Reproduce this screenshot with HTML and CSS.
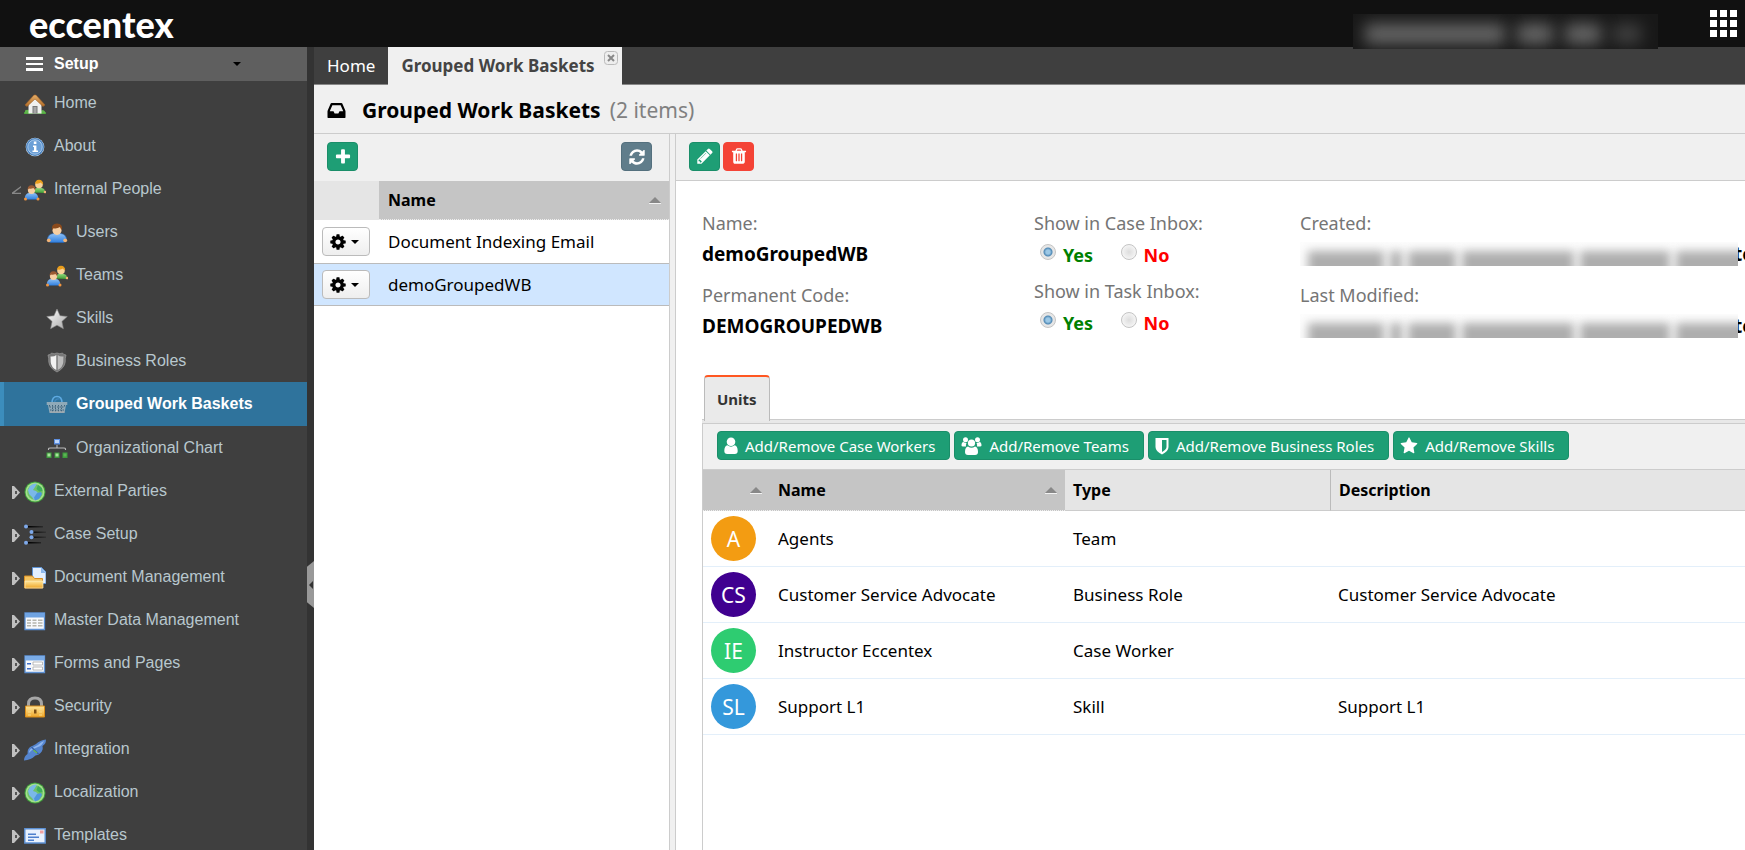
FILE: index.html
```html
<!DOCTYPE html>
<html lang="en">
<head>
<meta charset="utf-8">
<title>Grouped Work Baskets</title>
<link rel="stylesheet" href="styles.css">
</head>
<body>
<svg class="sprite" aria-hidden="true">
  <defs>
    <linearGradient id="g-blue" x1="0" y1="0" x2="0" y2="1"><stop offset="0" stop-color="#8fc1f5"/><stop offset="1" stop-color="#2f7fe0"/></linearGradient>
    <linearGradient id="g-green" x1="0" y1="0" x2="0" y2="1"><stop offset="0" stop-color="#8ed67a"/><stop offset="1" stop-color="#3f9c35"/></linearGradient>
    <linearGradient id="g-gold" x1="0" y1="0" x2="0" y2="1"><stop offset="0" stop-color="#ffe69a"/><stop offset="1" stop-color="#eea62a"/></linearGradient>
    <linearGradient id="g-silver" x1="0" y1="0" x2="1" y2="1"><stop offset="0" stop-color="#ffffff"/><stop offset="1" stop-color="#a8a8a8"/></linearGradient>
    <linearGradient id="g-roof" x1="0" y1="0" x2="0" y2="1"><stop offset="0" stop-color="#e5ad68"/><stop offset="1" stop-color="#b06b25"/></linearGradient>
    <linearGradient id="g-fade" x1="0" y1="0" x2="1" y2="0"><stop offset="0" stop-color="#000"/><stop offset="1" stop-color="#000" stop-opacity=".2"/></linearGradient>
    <symbol id="i-house" viewBox="0 0 22 22">
      <path d="M0 19h22v2H0z" fill="#4c9a3c"/><path d="M1 17.500q3-2 5 1v2H1zM16 18.500q3-3 5 0v2h-5z" fill="#5fb54b"/>
      <path d="M4.500 11 11 5l6.500 6v9.500h-13z" fill="#f0f0ee"/><path d="M8.500 13h5v7.500h-5z" fill="#777"/><path d="M9.500 14h3v6.500h-3z" fill="#a5a5a5"/>
      <path d="M1 12 10 2h2l9 10-2 1.500-8-7.500-8 7.500z" fill="url(#g-roof)" stroke="#a2632a" stroke-width=".6"/>
    </symbol>
    <symbol id="i-info" viewBox="0 0 22 22">
      <circle cx="11" cy="11" r="9.300" fill="#dbe8f6"/><circle cx="11" cy="11" r="9" fill="#4c84c0"/><circle cx="11" cy="11" r="7.200" fill="#6b9fd6" stroke="#a9c9eb"/>
      <path d="M9.800 5.500h2.600v2.400H9.800zM9 9.500h3.400v5H14V16H8.500v-1.500H10V11H9z" fill="#fff"/>
    </symbol>
    <symbol id="i-person" viewBox="0 0 22 22">
      <path d="M1.500 19q-.5-7 6-7.500h7q6.500.5 6 7.500l-3 1.500h-13z" fill="url(#g-blue)" stroke="#2968b8" stroke-width=".6"/>
      <circle cx="2.800" cy="18.300" r="1.900" fill="#f2b375"/><circle cx="19.200" cy="18.300" r="1.900" fill="#f2b375"/>
      <ellipse cx="11" cy="8" rx="4.600" ry="5" fill="#f7cfa2"/><path d="M6 8Q5 1.500 11 1.500T16 8Q14.500 7 14 5q-3 2-6.500 1.200Q7 7.500 6 8z" fill="#8a4a1c"/>
    </symbol>
    <symbol id="i-people" viewBox="0 0 22 22">
      <path d="M9 13.500q.5-4 4-4.500h4.500q4 .5 3.500 5z" fill="url(#g-green)"/><circle cx="15" cy="5.500" r="3.800" fill="#f9d29a"/><path d="M11 5.500Q11 .8 15 .8t4.200 4.700Q17.500 5 17 3.500q-2.500 1.500-5 1z" fill="#e99d1b"/><circle cx="21" cy="13" r="1.300" fill="#f2b375"/>
      <path d="M.8 20.500Q.5 14.500 5 14h5q4.500.5 4.200 6.500z" fill="url(#g-blue)"/><circle cx="1.500" cy="20" r="1.500" fill="#f2953f"/><circle cx="14" cy="20" r="1.500" fill="#f2953f"/>
      <ellipse cx="7.500" cy="11" rx="3.600" ry="4" fill="#f7cfa2"/><path d="M3.600 11Q3.500 6.200 7.500 6.200t3.900 4.800q-1.400-.5-1.900-2-2.500 1.200-4.500.5z" fill="#9a5a32"/>
    </symbol>
    <symbol id="i-star" viewBox="0 0 22 22"><path d="M11 1l3 6.700 7.300.8-5.400 4.900 1.500 7.300L11 17.200l-6.400 3.500 1.500-7.300L.7 8.500 8 7.700z" fill="url(#g-silver)" stroke="#888" stroke-width=".6"/></symbol>
    <symbol id="i-shield" viewBox="0 0 22 22"><path d="M2 4q2.500 0 3.500-2Q8 3.500 11 2q3 1.500 5.500 0 1 2 3.500 2-1 3-.8 7-.7 6-8.200 10Q3.500 17 2.800 11 3 7 2 4z" fill="#777" stroke="#999" stroke-width=".7"/><path d="M4.500 5.500Q8 6 10.300 4v15Q5 16 4.700 11q0-3-.2-5.500z" fill="#f2f2f2"/><path d="M11.700 4q2.300 2 5.800 1.500-.2 2.500-.2 5.500-.3 5-5.600 8z" fill="#bdbdbd"/></symbol>
    <symbol id="i-basket" viewBox="0 0 22 22">
      <path d="M6 9Q6 2.500 11 2.500T16 9" fill="none" stroke="#5eaae2" stroke-width="1.600"/><path d="M8.500 9Q9 4.500 13.500 5" fill="none" stroke="#3e86bd" stroke-width="1.200"/>
      <path d="M.7 8h20.600v3H20l-1.500 8h-15L2 11H.7z" fill="#8fa9b8"/><path d="M3.500 11v2M6.500 11v7M9.500 11v7M12.500 11v7M15.500 11v7M18.500 11v2M3.500 13h15M4 16h14" stroke="#40657c" stroke-width="1" stroke-dasharray="1.500 1"/><path d="M4 18h14.500" stroke="#aaa"/>
    </symbol>
    <symbol id="i-org" viewBox="0 0 22 22">
      <path d="M8 1h6v5.500H8z" fill="#5d8fe0"/><path d="M9 2h4v3H9z" fill="#bcd5fa"/><path d="M11 7v3M2.500 12v-1.200q0-.8 2-.8h13q2 0 2 .8V12" fill="none" stroke="#bbb" stroke-width="1.100"/>
      <path d="M.5 14.500h5V20h-5zM8.500 14.500h5V20h-5zM16.500 14.500h5V20h-5z" fill="#3c9b3c"/><path d="M1.500 15.500h3V18.500h-3zM9.500 15.500h3v3h-3z" fill="#a6e39a"/><path d="M17.500 15.500h3v3h-3z" fill="#5bb352"/>
    </symbol>
    <symbol id="i-globe" viewBox="0 0 22 22"><circle cx="11" cy="11" r="10.500" fill="#3e9d3b"/><circle cx="11" cy="11" r="9.500" fill="#a5e08c"/><circle cx="11" cy="11" r="7.800" fill="#6fc267"/><path d="M6 5q3-3 7-2.500L11 6 9 9l3 1 3 3-2 4-3 2-2-3-3-3-1-4z" fill="#7ab8e8"/><path d="M13 12l4-1 1 2-3 5-4 1.500-1-3z" fill="#4f96dd"/><path d="M14 4l4 3 .5 3-3 .5-3-2.500z" fill="#3fae5a"/></symbol>
    <symbol id="i-tree" viewBox="0 0 22 22"><path d="M4 2h15v1.500H4zM9 7.500h13V9H9zM9 12.500h13V14H9zM4 18h13v1.500H4z" fill="url(#g-fade)"/><circle cx="2" cy="2.500" r="2" fill="#7ea9ea"/><circle cx="7.500" cy="8" r="2" fill="#7ea9ea"/><circle cx="7.500" cy="13.300" r="2" fill="#7ea9ea"/><circle cx="2" cy="18.800" r="2" fill="#7ea9ea"/></symbol>
    <symbol id="i-folder" viewBox="0 0 22 22"><path d="M8.500.5h9L22 5v11.500H8.500z" fill="#e4f0ff" stroke="#5d92d4"/><path d="M17 .5V6h5z" fill="#8db8ec"/><path d="M.5 9h8l2 2.500h8V21H.5z" fill="#f5c460" stroke="#d98e22"/><path d="M1 14h18v7H1z" fill="url(#g-gold)" stroke="#f8ebbf" stroke-width=".7"/></symbol>
    <symbol id="i-grid" viewBox="0 0 22 22"><path d="M1 3h19.500v16.500H1z" fill="#f7f9fc" stroke="#5c90d3" stroke-width="1.300"/><path d="M1 3h19.500v4.500H1z" fill="#6fa3e2"/><path d="M3 9.500h4V11H3zM8.500 9.500h4V11h-4zM14 9.500h4.500V11H14zM3 12.200h4v1.500H3zM8.500 12.200h4v1.500h-4zM14 12.200h4.500v1.500H14zM3 15h4v1.500H3zM8.500 15h4v1.500h-4zM14 15h4.500v1.500H14z" fill="#b5b5ad"/></symbol>
    <symbol id="i-form" viewBox="0 0 22 22"><path d="M1 3h19.500v16.500H1z" fill="#f7f9fc" stroke="#5c90d3" stroke-width="1.300"/><path d="M1 3h19.500v4.500H1z" fill="#7aabe6"/><path d="M3 10h4v1.500H3zM3 15h4v1.500H3z" fill="#3f6fc9"/><path d="M9 9h9.500v3H9zM9 14h9.500v3H9z" fill="#fff" stroke="#aaa" stroke-width=".8"/></symbol>
    <symbol id="i-lock" viewBox="0 0 22 22"><path d="M4.500 11V8Q4.500 2 11 2t6.500 6v3" fill="none" stroke="#a6a6a6" stroke-width="3"/><path d="M1.500 10h19v11h-19z" fill="url(#g-gold)" stroke="#d98c1a"/><path d="M4 13h3M4 16h3M4 19h3M15 13h3M15 16h3M15 19h3" stroke="#f8dc8c"/><path d="M10 13.500h2.500v4H10z" fill="#7a4c12"/></symbol>
    <symbol id="i-plug" viewBox="0 0 22 22"><path d="M0 21.500Q0 17 3.500 15 3 9.500 7 7.500q2-1 5-2.500Q16 1 22 .5q0 4.500-3.500 6.500 1 4-2 7-2 2-5 2.500Q7 21 0 21.500z" fill="#5585cf"/><path d="M5 14q0-4 4-5.500L14 6q3-3 6-4-2 5-6 6Q8 10 5 14z" fill="#8db5ee"/><path d="M7.500 8l7 7" stroke="#3a62a8" stroke-width="1.500"/><path d="M9.500 11l3.500 3" stroke="#69b84e" stroke-width="1.500"/></symbol>
    <symbol id="i-card" viewBox="0 0 22 22"><path d="M.8 3.800h20.400V18H.8z" fill="#e8f1fd" stroke="#5c90d3" stroke-width="1.400"/><path d="M16 5.500h3.500v3H16z" fill="#f0a0a0"/><path d="M4 8.500h8V10H4zM4 11.500h11V13H4zM4 14.500h6V16H4z" fill="#4d80cd"/></symbol>
    <symbol id="i-plus" viewBox="0 0 1792 1792"><path d="M1600 736v192q0 40-28 68t-68 28h-416v416q0 40-28 68t-68 28h-192q-40 0-68-28t-28-68v-416h-416q-40 0-68-28t-28-68v-192q0-40 28-68t68-28h416v-416q0-40 28-68t68-28h192q40 0 68 28t28 68v416h416q40 0 68 28t28 68z"/></symbol>
    <symbol id="i-refresh" viewBox="0 0 1792 1792"><path d="M1639 1056q0 5-1 7-64 268-268 434.500t-478 166.500q-146 0-282.500-55t-243.500-157l-129 129q-19 19-45 19t-45-19-19-45v-448q0-26 19-45t45-19h448q26 0 45 19t19 45-19 45l-137 137q71 66 161 102t187 36q134 0 250-65t186-179q11-17 53-117 8-23 30-23h192q13 0 22.500 9.500t9.500 22.500zm25-800v448q0 26-19 45t-45 19h-448q-26 0-45-19t-19-45 19-45l138-138q-148-137-349-137-134 0-250 65t-186 179q-11 17-53 117-8 23-30 23h-199q-13 0-22.500-9.500t-9.500-22.500v-7q65-268 270-434.500t480-166.500q146 0 284 55.500t245 156.500l130-129q19-19 45-19t45 19 19 45z"/></symbol>
    <symbol id="i-cog" viewBox="0 0 1792 1792"><path d="M1152 896q0-106-75-181t-181-75-181 75-75 181 75 181 181 75 181-75 75-181zm512-109v222q0 12-8 23t-20 13l-185 28q-19 54-39 91 35 50 107 138 10 12 10 25t-9 23q-27 37-99 108t-94 71q-12 0-26-9l-138-108q-44 23-91 38-16 136-29 186-7 28-36 28h-222q-14 0-24.500-8.500t-11.500-21.500l-28-184q-49-16-90-37l-141 107q-10 9-25 9-14 0-25-11-126-114-165-168-7-10-7-23 0-12 8-23 15-21 51-66.500t54-70.500q-27-50-41-99l-183-27q-13-2-21-12.500t-8-23.500v-222q0-12 8-23t19-13l186-28q14-46 39-92-40-57-107-138-10-12-10-24 0-10 9-23 26-36 98.500-107.500t94.500-71.500q13 0 26 10l138 107q44-23 91-38 16-136 29-186 7-28 36-28h222q14 0 24.500 8.500t11.500 21.500l28 184q49 16 90 37l142-107q9-9 24-9 13 0 25 10 129 119 165 170 7 8 7 22 0 12-8 23-15 21-51 66.500t-54 70.500q26 50 41 98l183 28q13 2 21 12.500t8 23.500z"/></symbol>
    <symbol id="i-pencil" viewBox="0 0 1792 1792"><path d="M491 1536l91-91-235-235-91 91v107h128v128h107zm523-928q0-22-22-22-10 0-17 7l-542 542q-7 7-7 17 0 22 22 22 10 0 17-7l542-542q7-7 7-17zm-54-192l416 416-832 832h-416v-416zm683 96q0 53-37 90l-166 166-416-416 166-165q36-38 90-38 53 0 91 38l235 234q37 39 37 91z"/></symbol>
    <symbol id="i-trash" viewBox="0 0 1792 1792"><path d="M704 1376v-704q0-14-9-23t-23-9h-64q-14 0-23 9t-9 23v704q0 14 9 23t23 9h64q14 0 23-9t9-23zm256 0v-704q0-14-9-23t-23-9h-64q-14 0-23 9t-9 23v704q0 14 9 23t23 9h64q14 0 23-9t9-23zm256 0v-704q0-14-9-23t-23-9h-64q-14 0-23 9t-9 23v704q0 14 9 23t23 9h64q14 0 23-9t9-23zm-544-992h448l-48-117q-7-9-17-11h-317q-10 2-17 11zm928 32v64q0 14-9 23t-23 9h-96v948q0 83-47 143.500t-113 60.500h-832q-66 0-113-58.500t-47-141.500v-952h-96q-14 0-23-9t-9-23v-64q0-14 9-23t23-9h309l70-167q15-37 54-63t79-26h320q40 0 79 26t54 63l70 167h309q14 0 23 9t9 23z"/></symbol>
    <symbol id="i-fstar" viewBox="0 0 1792 1792"><path d="M1728 647q0 22-26 48l-363 354 86 500q1 7 1 20 0 21-10.500 35.500t-30.500 14.500q-19 0-40-12l-449-236-449 236q-22 12-40 12-21 0-31.500-14.500t-10.500-35.500q0-6 2-20l86-500-364-354q-25-27-25-48 0-37 56-46l502-73 225-455q19-41 49-41t49 41l225 455 502 73q56 9 56 46z"/></symbol>
    <symbol id="i-inbox" viewBox="0 0 1792 1792"><path d="M1151 960h316q-1-3-2.500-8t-2.500-8l-212-496h-708l-212 496q-1 2-2.500 8t-2.500 8h316l95 192h320zm513 30v482q0 26-19 45t-45 19h-1408q-26 0-45-19t-19-45v-482q0-62 25-123l238-552q10-25 36.500-42t52.500-17h832q26 0 52.500 17t36.500 42l238 552q25 61 25 123z"/></symbol>
    <symbol id="i-user" viewBox="0 0 14 18"><circle cx="7" cy="4.800" r="4.300"/><path d="M3.500 8.200Q.3 8.700.3 14q0 3 3 3h7.400q3 0 3-3 0-5.300-3.200-5.800-3.500 2.900-7 0z"/></symbol>
    <symbol id="i-users" viewBox="0 0 20 18"><circle cx="4" cy="2.700" r="2.500"/><circle cx="16" cy="2.700" r="2.500"/><path d="M2 5q-2 .3-2 3.500 0 1 1.500 1h3Q4 7.500 5 6q-1.500-.2-3-1zM18 5q2 .3 2 3.500 0 1-1.500 1h-3Q16 7.500 15 6q1.500-.2 3-1z"/><circle cx="10" cy="6" r="3.600"/><path d="M6.500 9.600q-3 .7-3 5.400 0 3 3 3h7q3 0 3-3 0-4.700-3-5.400-3.500 2.400-7 0z"/></symbol>
    <symbol id="i-fshield" viewBox="0 0 14 18"><path fill-rule="evenodd" d="M.5 1h13v9q0 4-6.500 7.500Q.5 14 .5 10zM7 3v12q4.500-2.500 4.500-5V3z"/></symbol>
  </defs>
</svg>

<header class="topbar">
  <a class="logo" href="#">eccentex</a>
  <div class="account" aria-hidden="true"><i class="w1"></i><i class="w2"></i><i class="w3"></i><i class="w4"></i></div>
  <button class="apps" aria-label="Applications"><i></i><i></i><i></i><i></i><i></i><i></i><i></i><i></i><i></i></button>
</header>

<div class="shell">
  <nav class="sidebar">
    <button class="setup"><span class="burger"></span>Setup<span class="caret"></span></button>
    <ul class="menu">
      <li><a href="#"><svg><use href="#i-house"/></svg>Home</a></li>
      <li><a href="#"><svg><use href="#i-info"/></svg>About</a></li>
      <li><a href="#" class="open"><svg><use href="#i-people"/></svg>Internal People</a>
        <ul>
          <li><a href="#"><svg><use href="#i-person"/></svg>Users</a></li>
          <li><a href="#"><svg><use href="#i-people"/></svg>Teams</a></li>
          <li><a href="#"><svg><use href="#i-star"/></svg>Skills</a></li>
          <li><a href="#"><svg><use href="#i-shield"/></svg>Business Roles</a></li>
          <li><a href="#" class="current"><svg><use href="#i-basket"/></svg>Grouped Work Baskets</a></li>
          <li><a href="#"><svg><use href="#i-org"/></svg>Organizational Chart</a></li>
        </ul>
      </li>
      <li><a href="#" class="closed"><svg><use href="#i-globe"/></svg>External Parties</a></li>
      <li><a href="#" class="closed"><svg><use href="#i-tree"/></svg>Case Setup</a></li>
      <li><a href="#" class="closed"><svg><use href="#i-folder"/></svg>Document Management</a></li>
      <li><a href="#" class="closed"><svg><use href="#i-grid"/></svg>Master Data Management</a></li>
      <li><a href="#" class="closed"><svg><use href="#i-form"/></svg>Forms and Pages</a></li>
      <li><a href="#" class="closed"><svg><use href="#i-lock"/></svg>Security</a></li>
      <li><a href="#" class="closed"><svg><use href="#i-plug"/></svg>Integration</a></li>
      <li><a href="#" class="closed"><svg><use href="#i-globe"/></svg>Localization</a></li>
      <li><a href="#" class="closed"><svg><use href="#i-card"/></svg>Templates</a></li>
    </ul>
  </nav>
  <div class="splitter"><button aria-label="Collapse menu"></button></div>

  <main class="main">
    <div class="tabs">
      <a class="tab" href="#">Home</a>
      <a class="tab active" href="#">Grouped Work Baskets</a>
      <button class="close" aria-label="Close tab"><svg viewBox="0 0 14 14"><rect x=".5" y=".5" width="13" height="13" rx="3"/><path d="M4 4l6 6M10 4l-6 6"/></svg></button>
    </div>
    <div class="title">
      <svg><use href="#i-inbox"/></svg>
      <h1>Grouped Work Baskets</h1><span>(2 items)</span>
    </div>

    <div class="columns">
      <section class="list">
        <div class="toolbar spread">
          <button class="btn" aria-label="Add"><svg><use href="#i-plus"/></svg></button>
          <button class="btn slate" aria-label="Refresh"><svg><use href="#i-refresh"/></svg></button>
        </div>
        <table class="baskets">
          <colgroup><col class="c-act"><col></colgroup>
          <thead><tr><th></th><th class="sorted"><div>Name<span class="sort"></span></div></th></tr></thead>
          <tbody>
            <tr><td><button class="gear" aria-label="Actions"><svg><use href="#i-cog"/></svg><span class="caret"></span></button></td><td>Document Indexing Email</td></tr>
            <tr class="selected"><td><button class="gear" aria-label="Actions"><svg><use href="#i-cog"/></svg><span class="caret"></span></button></td><td>demoGroupedWB</td></tr>
          </tbody>
        </table>
      </section>

      <section class="detail">
        <div class="toolbar ruled">
          <button class="btn" aria-label="Edit"><svg><use href="#i-pencil"/></svg></button>
          <button class="btn red" aria-label="Delete"><svg><use href="#i-trash"/></svg></button>
        </div>
        <div class="fields">
          <dl>
            <dt>Name:</dt><dd>demoGroupedWB</dd>
            <dt>Permanent Code:</dt><dd>DEMOGROUPEDWB</dd>
          </dl>
          <div class="choices">
            <fieldset>
              <legend>Show in Case Inbox:</legend>
              <label class="yes"><input type="radio" name="case" checked>Yes</label>
              <label class="no"><input type="radio" name="case">No</label>
            </fieldset>
            <fieldset>
              <legend>Show in Task Inbox:</legend>
              <label class="yes"><input type="radio" name="task" checked>Yes</label>
              <label class="no"><input type="radio" name="task">No</label>
            </fieldset>
          </div>
          <dl class="stamps">
            <dt>Created:</dt><dd><span class="redacted"><i class="r1"></i><i class="r2"></i><i class="r3"></i><i class="r4"></i><i class="r5"></i><i class="r6"></i></span>te</dd>
            <dt>Last Modified:</dt><dd><span class="redacted"><i class="r1"></i><i class="r2"></i><i class="r3"></i><i class="r4"></i><i class="r5"></i><i class="r6"></i></span>te</dd>
          </dl>
        </div>

        <div class="units">
          <div class="unit-tabs"><button class="unit-tab">Units</button></div>
          <div class="unit-panel">
            <div class="toolbar unit-bar">
              <button class="btn wide"><svg class="narrow"><use href="#i-user"/></svg>Add/Remove Case Workers</button>
              <button class="btn wide"><svg class="broad"><use href="#i-users"/></svg>Add/Remove Teams</button>
              <button class="btn wide"><svg class="narrow"><use href="#i-fshield"/></svg>Add/Remove Business Roles</button>
              <button class="btn wide"><svg><use href="#i-fstar"/></svg>Add/Remove Skills</button>
            </div>
            <table class="members">
              <colgroup><col class="c-ava"><col class="c-name"><col class="c-type"><col></colgroup>
              <thead><tr>
                <th class="sorted"><div><span class="sort"></span></div></th>
                <th class="sorted"><div>Name<span class="sort"></span></div></th>
                <th>Type</th><th class="edge">Description</th>
              </tr></thead>
              <tbody>
                <tr><td><span class="avatar orange">A</span></td><td>Agents</td><td>Team</td><td></td></tr>
                <tr><td><span class="avatar indigo">CS</span></td><td>Customer Service Advocate</td><td>Business Role</td><td>Customer Service Advocate</td></tr>
                <tr><td><span class="avatar green">IE</span></td><td>Instructor Eccentex</td><td>Case Worker</td><td></td></tr>
                <tr><td><span class="avatar blue">SL</span></td><td>Support L1</td><td>Skill</td><td>Support L1</td></tr>
              </tbody>
            </table>
          </div>
        </div>
      </section>
    </div>
  </main>
</div>
</body>
</html>
```
FILE: styles.css
```css
* { box-sizing: border-box; }
body {
  margin: 0;
  height: 100vh;
  display: flex;
  flex-direction: column;
  overflow: hidden;
  font: 17px/24px "Noto Sans", "Open Sans", sans-serif;
  color: #000;
  background: #fff;
}
button { font: inherit; border: 0; padding: 0; margin: 0; background: none; color: inherit; }
a { color: inherit; text-decoration: none; }
ul, dl, dd { margin: 0; padding: 0; list-style: none; }
.sprite { position: absolute; width: 0; height: 0; }

/* top bar */
.topbar {
  flex: none;
  height: 47px;
  display: flex;
  align-items: center;
  background: #111;
  padding: 0 8px 0 29px;
}
.logo { font: 900 36px/40px Lato, sans-serif; color: #fff; margin-right: auto; }
.account {
  position: relative;
  z-index: 2;
  align-self: flex-start;
  width: 305px;
  height: 35px;
  margin: 14px 52px 0 0;
  display: flex;
  align-items: center;
  gap: 12px;
  padding: 4px 16px 0 12px;
  overflow: hidden;
  background: #181818;
}
.account i { height: 20px; background: #686868; filter: blur(8px); }
.w1 { width: 140px; }
.w2 { width: 36px; }
.w3 { width: 36px; }
.w4 { width: 28px; opacity: .5; }
.apps { display: grid; grid-template-columns: repeat(3, 7px); gap: 3px; }
.apps i { height: 7px; background: #fff; }

/* sidebar */
.shell { flex: 1; display: flex; min-height: 0; }
.sidebar {
  flex: none;
  width: 307px;
  overflow: hidden;
  background: #3f3f3f;
  color: #b8c7ce;
  font: 16px/20px "Liberation Sans", Arial, sans-serif;
}
.setup {
  width: 100%;
  height: 34px;
  display: flex;
  align-items: center;
  padding: 0 66px 0 26px;
  background: #5f5f5f;
  color: #fff;
  font-weight: bold;
}
.burger {
  width: 17px;
  height: 14px;
  margin-right: 11px;
  border-top: 3px solid #fff;
  border-bottom: 3px solid #fff;
  background: linear-gradient(#fff, #fff) center / 100% 2px no-repeat;
}
.caret { border: 4px solid transparent; border-top-color: #000; border-bottom: 0; }
.setup .caret { margin-left: auto; }
.menu a {
  position: relative;
  height: 43px;
  display: flex;
  align-items: center;
  gap: 8px;
  padding: 0 8px 0 24px;
}
.menu svg { width: 22px; height: 22px; margin-top: 2px; }
.menu ul a { padding-left: 46px; }
.menu .current {
  height: 44px;
  background: #2f739c;
  box-shadow: inset 4px 0 #3c8dbc;
  color: #fff;
  font-weight: bold;
}
.closed::before {
  content: "";
  position: absolute;
  left: 12px;
  top: 17px;
  width: 8px;
  height: 13px;
  background: linear-gradient(#555, #555) 3px 5px / 2px 3px no-repeat #c0c0c0;
  clip-path: polygon(0 0, 25% 0, 100% 50%, 25% 100%, 0 100%);
}
.open::before {
  content: "";
  position: absolute;
  left: 12px;
  top: 19px;
  width: 9px;
  height: 8px;
  background: #888;
  clip-path: polygon(100% 0, 100% 20%, 25% 85%, 100% 85%, 100% 100%, 0 100%, 0 80%);
}
.splitter { flex: none; width: 7px; padding-top: 514px; background: #333; }
.splitter button {
  display: block;
  width: 7px;
  height: 47px;
  background: #999;
  clip-path: polygon(100% 0, 100% 100%, 0 88%, 0 12%);
}
.splitter button::before { content: ""; display: block; margin: 0 auto; width: 0; border: 4px solid transparent; border-right-color: #333; border-left: 0; }

/* tabs and page title */
.main { flex: 1; min-width: 0; display: flex; flex-direction: column; background: #f0f0f0; }
.tabs { height: 38px; display: flex; background: #3f3f3f; border-bottom: 1px solid #888; color: #fff; }
.tab { padding: 7px 13px 0; height: 37px; }
.tab.active { padding-right: 27px; height: 38px; background: #f0f0f0; color: #444; font-weight: bold; }
.close { align-self: flex-start; margin: 4px 0 0 -18px; height: 14px; }
.close svg { display: block; width: 14px; height: 14px; fill: #eee; stroke: #bbb; }
.close path { stroke: #888; stroke-width: 2; }
.title { height: 49px; display: flex; align-items: center; padding: 2px 0 0 12px; border-bottom: 1px solid #ccc; font-size: 21px; color: #808080; }
.title svg { width: 21px; height: 21px; fill: #000; margin-right: 15px; }
.title h1 { margin: 0 9px 0 0; font-size: 21px; line-height: 28px; color: #000; }

/* toolbars and buttons */
.columns { flex: 1; display: flex; min-height: 0; }
.toolbar { height: 47px; display: flex; align-items: center; gap: 3px; padding: 0 13px 2px; background: #f0f0f0; }
.toolbar.spread { justify-content: space-between; padding-right: 17px; }
.toolbar.ruled { border-bottom: 1px solid #ccc; }
.btn {
  height: 29px;
  min-width: 31px;
  display: flex;
  align-items: center;
  justify-content: center;
  border: 1px solid #1a8e69;
  border-radius: 4px;
  background: #1e9e75;
  color: #fff;
  font-size: 15px;
}
.btn svg { width: 18px; height: 18px; fill: #fff; }
.btn.slate { background: #607d8b; border-color: #54707e; }
.btn.red { background: #f44336; border-color: #f44336; }
.btn.wide { padding: 0 14px 0 6px; gap: 7px; }
.btn .narrow { width: 14px; }
.btn .broad { width: 21px; }

/* tables */
table { width: 100%; border-collapse: separate; border-spacing: 0; table-layout: fixed; }
th { height: 39px; padding: 0 8px; text-align: left; font-size: 16px; background: #e5e5e5; }
td { padding: 0 8px; }
.sorted { background: #c5c5c5; border-bottom: 1px dotted #eee; }
th div { display: flex; align-items: center; justify-content: space-between; min-height: 24px; }
.sort { margin-left: auto; width: 12px; border: 6px solid transparent; border-bottom-color: #888; border-top: 0; box-shadow: 0 1px #f2f2f2; }

.list { flex: none; width: 356px; background: #fff; border-right: 1px solid #ccc; }
.c-act { width: 65px; }
.baskets td { height: 42px; border-bottom: 1px solid #bbb; }
.baskets th + th, .baskets td + td { padding-left: 9px; }
.baskets tr:first-child td { height: 44px; }
.selected td { background: #d0e6ff; }
.baskets td:first-child { padding-right: 0; }
.gear {
  width: 48px;
  height: 29px;
  display: flex;
  align-items: center;
  gap: 4px;
  padding-left: 6px;
  border: 1px solid #bbb;
  border-radius: 4px;
  background: linear-gradient(#fff, #eee);
}
.gear svg { width: 18px; height: 18px; fill: #000; }

/* detail */
.detail { flex: 1; min-width: 0; margin-left: 5px; border-left: 1px solid #ccc; background: #fff; overflow: hidden; display: flex; flex-direction: column; }
.fields { display: grid; grid-template-columns: 332px 266px 1fr; padding: 30px 0 0 26px; }
dt, legend { color: #757575; font-size: 18px; line-height: 24px; padding: 0; }
dd { font-size: 19px; font-weight: bold; line-height: 24px; margin: 7px 0 17px; }
fieldset { border: 0; margin: 0; padding: 0 0 13px; min-width: 0; }
fieldset label { display: inline-flex; align-items: center; gap: 7px; margin: 9px 17px 0 6px; line-height: 21px; font-size: 18px; font-weight: bold; }
.yes { color: #008000; }
.no { color: #f00; }
input[type="radio"] {
  appearance: none;
  width: 16px;
  height: 16px;
  margin: 0 0 6px;
  border: 1px solid #c4c4c4;
  border-radius: 50%;
  background: radial-gradient(#ddd, #f4f4f4 70%);
}
input[type="radio"]:checked { background: radial-gradient(circle, #9cc8e6 0 2px, #4f88b4 4px, #e6e6e6 5px); }
.stamps { overflow: hidden; }
.stamps dd { display: flex; overflow: hidden; margin-left: -10px; }
.redacted {
  position: relative;
  flex: none;
  display: flex;
  gap: 6px;
  width: 448px;
  height: 24px;
  padding: 9px 0 0 18px;
  margin-right: -4px;
  overflow: hidden;
  background: #fdfdfd;
}
.redacted i { flex: none; height: 26px; background: #aeaeae; filter: blur(5px); }
.r1 { width: 76px; }
.r2 { width: 12px; }
.r3 { width: 48px; }
.r4 { width: 112px; }
.r5 { width: 90px; }
.r6 { width: 80px; }

/* units */
.units { flex: 1; display: flex; flex-direction: column; padding: 0 0 0 26px; margin-top: 20px; }
.unit-tabs { height: 49px; display: flex; padding-left: 2px; border-bottom: 1px solid #ccc; background: linear-gradient(#ccc, #ccc) 0 44px / 100% 1px no-repeat, linear-gradient(#fff 44px, #e8e8e8 44px); }
.unit-tab {
  height: 46px;
  padding: 0 12px;
  border: 1px solid #bbb;
  border-top: 2px solid #ff5722;
  border-bottom: 0;
  border-radius: 4px 4px 0 0;
  background: #eaeaea;
  font-size: 15px;
  font-weight: bold;
  color: #333;
}
.unit-panel { flex: 1; border-left: 1px solid #ccc; }
.unit-bar { height: 46px; padding: 0 14px 2px; gap: 4px; border-bottom: 1px solid #ccc; }
.c-ava { width: 67px; }
.c-name { width: 295px; }
.c-type { width: 265px; }
.members th { height: 41px; border-bottom: 1px solid #ccc; }
.members th.sorted { border-bottom: 1px dotted #eee; }
.members .edge { border-left: 1px solid #bbb; }
.members td { height: 56px; border-bottom: 1px solid #e3effa; }
.avatar {
  width: 45px;
  height: 45px;
  display: flex;
  align-items: center;
  justify-content: center;
  border-radius: 50%;
  color: #fff;
  font-size: 21px;
}
.orange { background: #f39c12; }
.indigo { background: #400090; }
.green { background: #2ecc71; }
.blue { background: #3498db; }
```
